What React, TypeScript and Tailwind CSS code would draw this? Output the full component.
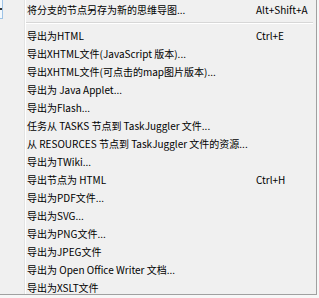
const items: { label: string; key?: string }[] = [
  { label: "导出为HTML", key: "Ctrl+E" },
  { label: "导出XHTML文件(JavaScript 版本)..." },
  { label: "导出XHTML文件(可点击的map图片版本)..." },
  { label: "导出为 Java Applet..." },
  { label: "导出为Flash..." },
  { label: "任务从 TASKS 节点到 TaskJuggler 文件..." },
  { label: "从 RESOURCES 节点到 TaskJuggler 文件的资源..." },
  { label: "导出为TWiki..." },
  { label: "导出节点为 HTML", key: "Ctrl+H" },
  { label: "导出为PDF文件..." },
  { label: "导出为SVG..." },
  { label: "导出为PNG文件..." },
  { label: "导出为JPEG文件" },
  { label: "导出为 Open Office Writer 文档..." },
  { label: "导出为XSLT文件" },
];

function Row({ label, shortcut }: { label: string; shortcut?: string }) {
  return (
    <div className="flex h-[18px] items-center pl-[1px]">
      <span className="w-[229px] shrink-0 whitespace-nowrap">{label}</span>
      {shortcut && <span className="whitespace-nowrap">{shortcut}</span>}
    </div>
  );
}

export default function App() {
  return (
    <div className="w-[319px] h-[298px] bg-[#f7f7f7] overflow-hidden font-['Noto_Sans_CJK_SC',sans-serif] text-[10px] leading-none text-black">
      <div className="relative w-[317px] h-[295px] bg-[#f0f0f0] border-r border-b border-[#a0a0a0] flex">
        <div className="absolute left-0 top-0 w-[3px] h-[19px] bg-[#f4f9fd] border-r border-b border-[#9ec3e6] flex items-center">
          <div className="w-[2px] h-[2px] bg-[#333]" />
        </div>
        <div className="w-[24px] shrink-0" />
        <div className="w-[1px] bg-[#e2e3e3]" />
        <div className="w-[1px] bg-white" />
        <div className="flex-1 pt-[1px]">
          <Row label="将分支的节点另存为新的思维导图..." shortcut="Alt+Shift+A" />
          <div className="h-[8px] pt-[3px] mr-[3px]">
            <div className="h-[1px] bg-[#d7d7d7]" />
            <div className="h-[1px] bg-white" />
          </div>
          {items.map((it) => (
            <Row key={it.label} label={it.label} shortcut={it.key} />
          ))}
        </div>
      </div>
    </div>
  );
}
